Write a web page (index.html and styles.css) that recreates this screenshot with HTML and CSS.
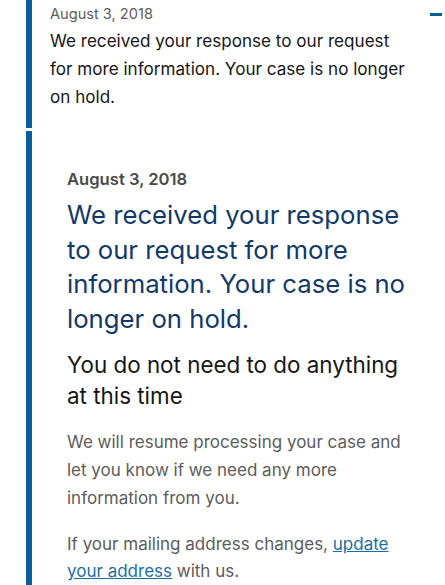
FILE: index.html
```html
<!DOCTYPE html>
<html lang="en">
<head>
    <meta charset="UTF-8">
    <meta name="viewport" content="width=device-width, initial-scale=1.0">
    <title>Case Status</title>
    <link rel="stylesheet" href="styles.css">
</head>
<body>

<div class="history">
    <!-- Collapsed history entry -->
    <div class="event">
        <div class="event-header">
            <span class="event-date">August 3, 2018</span>
            <span class="toggle" aria-label="Collapse"></span>
        </div>
        <p class="event-summary">We received your response to our request for more information. Your case is no longer on hold.</p>
    </div>

    <!-- Expanded details -->
    <div class="event event-detail">
        <div class="detail-date">August 3, 2018</div>
        <h1 class="detail-title">We received your response to our request for more information. Your case is no longer on hold.</h1>
        <h2 class="detail-subtitle">You do not need to do anything at this time</h2>
        <p class="detail-text">We will resume processing your case and let you know if we need any more information from you.</p>
        <p class="detail-text">If your mailing address changes, <a href="#">update your address</a> with us.</p>
    </div>
</div>

</body>
</html>
```

FILE: styles.css
```css
/* Page */
body {
    margin: 0;
    font-family: "Inter", "Liberation Sans", sans-serif;
    background-color: #fff;
    color: #1b1b1b;
    overflow: hidden;
}

/* Timeline of case events */
.history {
    padding-left: 26px;
}

.event {
    border-left: 6px solid #0a5e9d;
    padding: 2px 3px 17px 18px;
    margin-bottom: 3px;
}

.event-header {
    display: flex;
    justify-content: space-between;
    align-items: center;
}

.event-date {
    font-size: 14.6px;
    line-height: 24px;
    color: #5c5c5c;
}

.toggle {
    width: 12px;
    height: 3px;
    background-color: #0a5e9d;
}

.event-summary {
    margin: 1px 0 0;
    padding-right: 32px;
    font-size: 17.1px;
    line-height: 28px;
    color: #161616;
}

/* Expanded entry */
.event-detail {
    padding: 36px 32px 0 35px;
    margin-bottom: 0;
}

.detail-date {
    font-size: 16.6px;
    line-height: 24px;
    font-weight: 600;
    color: #4a4a4a;
}

.detail-title {
    margin: 7px 0 0;
    font-size: 25.7px;
    line-height: 34.7px;
    font-weight: normal;
    color: #11396a;
}

.detail-subtitle {
    margin: 13px 0 0;
    font-size: 22.4px;
    line-height: 30.7px;
    font-weight: normal;
    color: #161616;
}

.detail-text {
    margin: 18px 0 0;
    font-size: 17px;
    line-height: 27.8px;
    color: #5c5c5c;
}

.detail-text a {
    color: #1a6ea8;
}
```
